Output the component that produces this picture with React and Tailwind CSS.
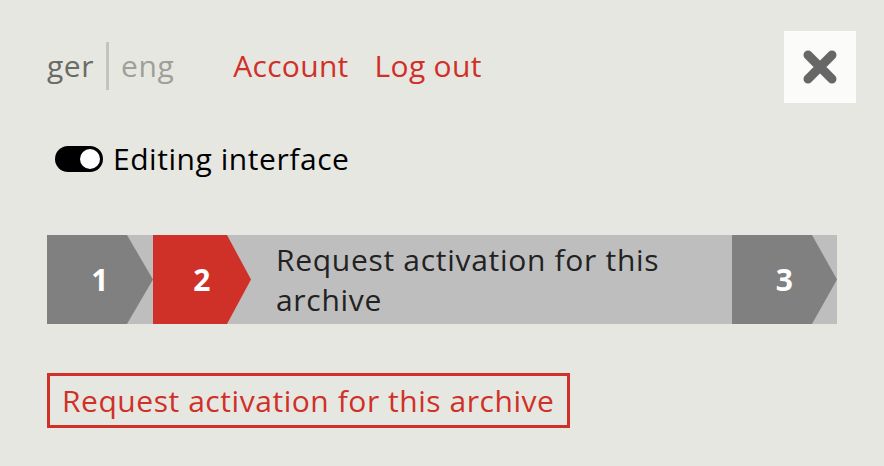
import React from "react";

const font = { fontFamily: '"Open Sans", "Noto Sans", sans-serif' };

function Step({ n, width, body, red }) {
  return (
    <div
      className={`flex items-center justify-center h-full shrink-0 text-white font-bold text-[30px] ${red ? "bg-[#cf3028]" : "bg-[#808080]"}`}
      style={{
        width: width,
        clipPath: `polygon(0 0, ${body}px 0, 100% 50%, ${body}px 100%, 0 100%)`,
      }}
    >
      {n}
    </div>
  );
}

export default function App() {
  return (
    <div className="relative min-h-screen w-full bg-[#e7e7e2] px-[47px] tracking-[0.55px]" style={font}>
      <div className="flex items-center h-[67px] pt-[32px] box-content">
        <div className="flex items-center h-full">
          <span className="text-[30px] text-[#6a6b63] leading-none">ger</span>
          <span className="mx-[12px] w-[3px] h-[48px] bg-[#c4c4bd]" />
          <span className="text-[30px] text-[#9e9f99] leading-none">eng</span>
        </div>
        <a className="ml-[59px] text-[30px] text-[#cf3028] leading-none tracking-[0.3px]">Account</a>
        <a className="ml-[26px] text-[30px] text-[#cf3028] leading-none tracking-[0.3px]">Log out</a>
      </div>

      <button className="absolute top-[31px] right-[28px] w-[72px] h-[72px] bg-[#fbfbf9] flex items-center justify-center">
        <svg width="34" height="34" viewBox="0 0 34 34">
          <path d="M5 5 L29 29 M29 5 L5 29" stroke="#676767" strokeWidth="9" strokeLinecap="round" />
        </svg>
      </button>

      <div className="flex items-center mt-[47px] h-[26px] pl-[8px]">
        <div className="relative w-[48px] h-[26px] rounded-full bg-black">
          <div className="absolute right-[3px] top-[3px] w-[20px] h-[20px] rounded-full bg-white" />
        </div>
        <span className="ml-[10px] text-[30px] text-black leading-none">Editing interface</span>
      </div>

      <div className="flex items-stretch mt-[63px] h-[89px] bg-[#bebebe]">
        <Step n="1" width={106} body={80} />
        <Step n="2" width={98} body={74} red />
        <div className="flex-1 flex items-center pl-[25px] pr-[20px] text-[30px] leading-[40px] text-[#222] tracking-[0.7px]">
          Request activation for this archive
        </div>
        <Step n="3" width={105} body={80} />
      </div>

      <div className="mt-[49px]">
        <button className="border-[3px] border-[#cf3028] h-[55px] px-[12px] text-[30px] text-[#cf3028] leading-none">
          Request activation for this archive
        </button>
      </div>
    </div>
  );
}
